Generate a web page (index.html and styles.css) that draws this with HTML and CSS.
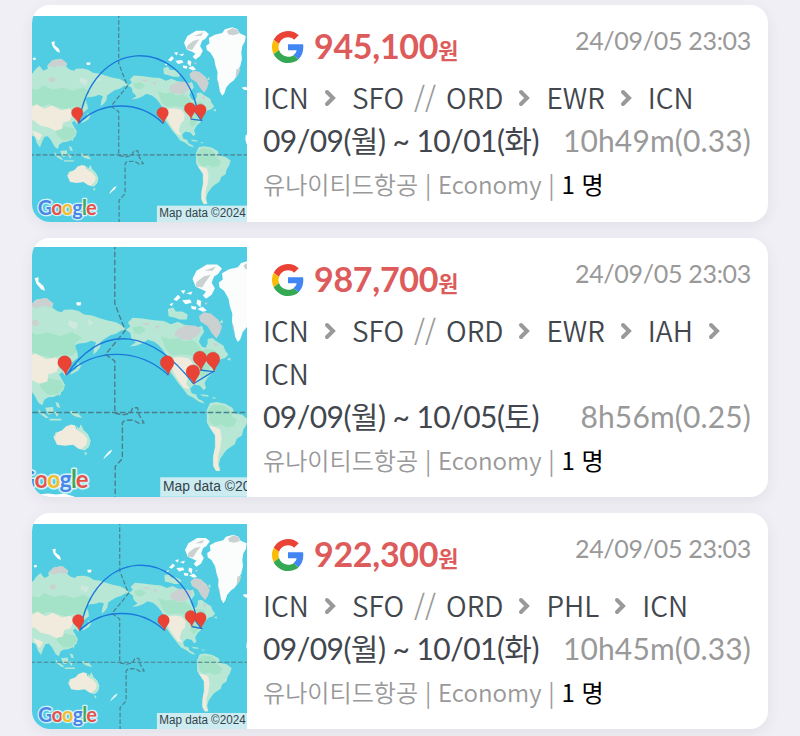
FILE: index.html
```html
<!DOCTYPE html>
<html lang="ko">
<head>
  <meta charset="utf-8">
  <title>항공권</title>
  <link rel="stylesheet" href="styles.css">
</head>
<body>
  <svg class="defs" width="0" height="0">
    <defs>
      <symbol id="google" viewBox="0 0 48 48">
        <path fill="#ea4335" d="M24 9.5c3.54 0 6.71 1.22 9.21 3.6l6.85-6.85C35.9 2.38 30.47 0 24 0 14.62 0 6.51 5.38 2.56 13.22l7.98 6.19C12.43 13.72 17.74 9.5 24 9.5z"/>
        <path fill="#4285f4" d="M46.98 24.55c0-1.57-.15-3.09-.38-4.55H24v9.02h12.94c-.58 2.96-2.26 5.48-4.78 7.18l7.73 6c4.51-4.18 7.09-10.36 7.09-17.65z"/>
        <path fill="#fbbc05" d="M10.53 28.59c-.48-1.45-.76-2.99-.76-4.59s.27-3.14.76-4.59l-7.98-6.19C.92 16.46 0 20.12 0 24c0 3.88.92 7.54 2.56 10.78l7.97-6.19z"/>
        <path fill="#34a853" d="M24 48c6.48 0 11.93-2.13 15.89-5.81l-7.73-6c-2.15 1.45-4.92 2.3-8.16 2.3-6.26 0-11.57-4.22-13.47-9.91l-7.98 6.19C6.51 42.62 14.62 48 24 48z"/>
      </symbol>
      <symbol id="next" viewBox="0 0 12 18">
        <path d="M3 3l6 6-6 6" fill="none" stroke="#999" stroke-width="4" stroke-linecap="round"/>
      </symbol>
      <path id="pin" d="M0 0C-3-15-20-18-20-32a17 17 0 0 1 34 0C14-20 3-15 0 0z" fill="#ea4335" stroke="#c5362b" stroke-width="1"/>
      <g id="world">
        <!-- asia -->
        <path class="land" d="M20 225L38 222 48 208 60 197 72 212 85 206 84 196 100 180 125 176 143 190 140 200 152 209 163 212 170 206 190 205 206 209 220 218 240 220 256 226 276 232 300 237 318 247 325 256 313 258 300 266 286 270 270 280 262 286 260 300 252 311 243 318 245 302 250 288 238 284 225 289 204 291 194 298 203 312 205 326 195 334 186 342 181 366 172 372 165 362 157 368 165 382 172 395 168 408 155 420 142 425 130 426 120 432 115 446 106 440 95 420 85 408 75 410 68 425 62 442 53 430 46 410 20 398z"/>
        <path class="forest" d="M20 262L55 270 70 256 100 268 130 263 160 272 190 262 215 276 196 291 202 310 188 322 165 318 142 328 110 320 88 312 60 322 20 310zM105 385L135 378 162 384 170 400 154 418 130 420 112 404z"/>
        <path class="desert" d="M20 330L52 312 75 326 98 316 125 330 150 325 160 340 150 362 130 368 128 386 108 392 88 382 62 376 42 360 20 362zM38 392L56 398 68 404 58 422 44 404z"/>
        <path class="tundra" d="M84 196L98 181 125 176 143 190 136 200 118 196 102 202zM86 235L102 230 108 242 94 248z"/>
        <path class="snow" d="M96 126L106 124 105 135 118 146 122 158 112 154 100 140zM200 187L213 187 211 195 202 195zM40 174L48 172 50 179 42 180z"/>
        <path class="soft" d="M182 232L205 240 198 256 180 245zM230 230L244 238 232 246z"/>
        <path class="land" d="M204 338L213 346 206 358 194 365 184 370 188 363 200 354zM156 413L162 416 158 424zM148 438L156 440 160 453 152 450zM104 455L116 464 132 478 124 478 110 468zM122 452L142 450 144 466 130 470zM146 462L158 462 152 476zM132 480L164 480 162 484 134 484zM184 460L202 463 215 478 200 475 190 470z"/>
        <!-- oceania -->
        <path class="desert" d="M143 526L150 515 165 509 174 499 188 494 198 497 200 505 206 508 212 495 218 508 229 519 236 535 232 550 222 559 206 555 192 545 172 548 152 545z"/>
        <path class="land" d="M200 497L208 505 212 495 218 508 229 519 236 535 232 550 222 559 214 555 226 544 228 530 216 516 204 510zM220 564L228 565 224 573zM147 516L152 512 146 533z"/>
        <path class="snow" d="M282 562L291 557 286 566 278 573 268 582 272 574z"/>
        <!-- north america -->
        <path class="land" d="M325 256L336 248 330 238 342 226 366 228 396 232 420 234 438 242 455 236 470 243 490 248 500 252 516 246 521 262 512 275 508 286 516 299 525 301 530 290 530 279 542 277 550 284 560 290 570 296 574 308 582 318 574 327 563 330 555 338 546 350 541 366 530 376 522 390 526 402 520 408 511 397 496 394 486 404 490 416 501 419 506 430 516 434 523 442 508 437 494 427 480 420 470 407 456 390 445 374 436 362 432 345 429 325 420 310 409 296 396 286 380 281 366 290 350 296 334 298 350 288 338 276 336 264z"/>
        <path class="forest" d="M412 272L436 280 455 276 470 285 492 282 505 292 516 308 530 304 548 307 556 318 542 332 525 326 496 322 468 318 440 320 425 306zM340 250L362 246 376 256 362 268 346 264zM520 340L538 340 532 366 516 382 508 366z"/>
        <path class="desert" d="M438 327L460 324 483 328 494 342 492 360 482 370 476 392 486 406 470 401 458 385 446 366 438 350z"/>
        <path class="tundra" d="M452 256L476 244 500 246 514 254 507 268 488 282 466 281 446 270zM508 222L520 212 538 215 556 230 566 248 560 266 552 278 540 264 530 247 512 235zM362 240L386 238 380 246zM396 248L410 245 404 256zM543 289L557 291 550 300z"/>
        <path class="land" d="M430 204L444 200 450 210 466 210 480 218 478 230 460 230 448 226 432 222zM560 238L566 230 569 240zM578 330L586 326 588 334z"/>
        <path class="snow" d="M492 128L502 108 528 92 554 92 566 102 556 116 546 122 540 138 548 152 540 168 526 178 518 170 526 160 514 154 500 148zM444 180L456 168 462 175 452 184zM462 158L474 156 470 166zM466 182L486 180 490 188 474 192zM488 196L502 198 500 206 490 204zM504 180L514 184 512 200 502 190zM434 192L444 188 440 197zM476 164L492 160 488 168zM504 204L518 198 528 208 518 211z"/>
        <path class="tundra" d="M502 136L520 122 538 118 526 134 516 150 500 147zM522 108L550 97 543 108zM522 188L530 188 526 194z"/>
        <!-- greenland -->
        <path class="snow" d="M558 137L568 130 566 114 584 104 606 99 614 88 636 82 652 88 658 100 676 108 674 124 666 138 663 158 665 176 660 198 652 212 651 226 640 241 628 250 618 262 612 280 606 287 599 274 596 255 591 236 592 216 586 198 582 177 571 158 560 150z"/>
        <path class="tundra" d="M620 94L636 84 653 90 656 101 638 106 624 103zM648 208L660 204 656 220 646 234zM592 238L597 252 594 258z"/>
        <path class="snow" d="M664 263L672 260 690 263 690 270 672 270zM676 405L690 398 690 438 679 432 675 418z"/>
        <!-- south america -->
        <path class="land" d="M528 458L536 440 552 438 574 442 592 452 598 466 616 470 631 481 627 495 619 508 616 522 603 530 598 544 586 552 578 558 570 568 562 580 558 594 562 610 552 612 544 600 543 580 548 552 548 522 538 506 528 490z"/>
        <path class="forest" d="M532 456L546 444 570 446 586 458 592 474 604 482 596 498 578 502 564 494 548 500 534 486z"/>
        <path class="desert" d="M533 498L548 500 561 506 565 526 562 552 556 574 556 600 561 611 550 610 544 596 545 570 550 548 549 520z"/>
        <path class="land" d="M511 418L530 420 534 424 518 423zM540 426L552 427 546 430z"/>
        <path class="snow" d="M70 672L100 670 130 668 150 670 170 668 195 675 200 684 70 684z"/>
        <!-- equator and date line -->
        <path class="border" d="M30 464H690"/>
        <path class="border" d="M297 40V190L323 258 274 318 297 335V466L318 470 336 466 342 452H354L358 470 370 490 358 492 344 483 322 484 316 490V580L298 600V684"/>
      </g>
    </defs>
  </svg>

  <div class="card">
    <svg class="map" viewBox="38 48 642 617" preserveAspectRatio="none">
      <use href="#world"/>
      <path class="route-line" d="M178 370C215 108 480 108 530 322M176 370C245 300 360 300 430 370M512 357L544 361L526 335"/>
      <use href="#pin" x="176" y="370"/>
      <use href="#pin" x="431" y="370"/>
      <use href="#pin" x="513" y="357"/>
      <use href="#pin" x="544" y="361"/>
      <text class="logo" x="55" y="643" textLength="176"><tspan class="b">G</tspan><tspan class="r">o</tspan><tspan class="y">o</tspan><tspan class="b">g</tspan><tspan class="g">l</tspan><tspan class="r">e</tspan></text>
      <rect class="credit-bg" x="411" y="616" width="269" height="49"/>
      <text class="credit" x="418" y="651" textLength="258" lengthAdjust="spacingAndGlyphs">Map data ©2024</text>
    </svg>
    <div class="info">
      <div class="top">
        <svg class="google"><use href="#google"/></svg>
        <div class="price">945,100<span>원</span></div>
        <div class="time">24/09/05 23:03</div>
      </div>
      <div class="route">
        <span>ICN</span><svg class="next"><use href="#next"/></svg><span>SFO</span><i>//</i><span>ORD</span><svg class="next"><use href="#next"/></svg><span>EWR</span><svg class="next"><use href="#next"/></svg><span>ICN</span>
      </div>
      <div class="dates">
        <span>09/09(월) ~ 10/01(화)</span>
        <span class="duration">10h49m(0.33)</span>
      </div>
      <div class="airline">유나이티드항공 | Economy | <b>1 명</b></div>
    </div>
  </div>

  <div class="card tall">
    <svg class="map" viewBox="38 37 642 748" preserveAspectRatio="none">
      <use href="#world" transform="translate(-68.2 -20.1) scale(1.19)"/>
      <path class="route-line" d="M140 420C255 255 400 290 520 446M140 420C225 338 355 338 445 420M540 405L579 410L520 446"/>
      <use href="#pin" transform="translate(139 421) scale(1.19)"/>
      <use href="#pin" transform="translate(445 421) scale(1.19)"/>
      <use href="#pin" transform="translate(543 407) scale(1.19)"/>
      <use href="#pin" transform="translate(582 410) scale(1.19)"/>
      <use href="#pin" transform="translate(522 448) scale(1.19)"/>
      <g transform="translate(-68.2 -20.1) scale(1.19)">
        <text class="logo" x="55" y="653" textLength="176"><tspan class="b">G</tspan><tspan class="r">o</tspan><tspan class="y">o</tspan><tspan class="b">g</tspan><tspan class="g">l</tspan><tspan class="r">e</tspan></text>
        <rect class="credit-bg" x="411" y="627" width="269" height="49"/>
        <text class="credit" x="418" y="661" textLength="258" lengthAdjust="spacingAndGlyphs">Map data ©2024</text>
      </g>
    </svg>
    <div class="info">
      <div class="top">
        <svg class="google"><use href="#google"/></svg>
        <div class="price">987,700<span>원</span></div>
        <div class="time">24/09/05 23:03</div>
      </div>
      <div class="route">
        <span>ICN</span><svg class="next"><use href="#next"/></svg><span>SFO</span><i>//</i><span>ORD</span><svg class="next"><use href="#next"/></svg><span>EWR</span><svg class="next"><use href="#next"/></svg><span>IAH</span><svg class="next"><use href="#next"/></svg><span>ICN</span>
      </div>
      <div class="dates">
        <span>09/09(월) ~ 10/05(토)</span>
        <span class="duration">8h56m(0.25)</span>
      </div>
      <div class="airline">유나이티드항공 | Economy | <b>1 명</b></div>
    </div>
  </div>

  <div class="card">
    <svg class="map" viewBox="38 41 642 614" preserveAspectRatio="none">
      <use href="#world" transform="translate(3 -9)"/>
      <path class="route-line" d="M182 360C222 108 478 108 527 312M180 360C248 292 362 292 434 360M515 348L544 354L526 330"/>
      <use href="#pin" x="179" y="361"/>
      <use href="#pin" x="434" y="361"/>
      <use href="#pin" x="515" y="349"/>
      <use href="#pin" x="544" y="354"/>
      <text class="logo" x="56" y="634" textLength="176"><tspan class="b">G</tspan><tspan class="r">o</tspan><tspan class="y">o</tspan><tspan class="b">g</tspan><tspan class="g">l</tspan><tspan class="r">e</tspan></text>
      <rect class="credit-bg" x="411" y="607" width="269" height="49"/>
      <text class="credit" x="418" y="641" textLength="258" lengthAdjust="spacingAndGlyphs">Map data ©2024</text>
    </svg>
    <div class="info">
      <div class="top">
        <svg class="google"><use href="#google"/></svg>
        <div class="price">922,300<span>원</span></div>
        <div class="time">24/09/05 23:03</div>
      </div>
      <div class="route">
        <span>ICN</span><svg class="next"><use href="#next"/></svg><span>SFO</span><i>//</i><span>ORD</span><svg class="next"><use href="#next"/></svg><span>PHL</span><svg class="next"><use href="#next"/></svg><span>ICN</span>
      </div>
      <div class="dates">
        <span>09/09(월) ~ 10/01(화)</span>
        <span class="duration">10h45m(0.33)</span>
      </div>
      <div class="airline">유나이티드항공 | Economy | <b>1 명</b></div>
    </div>
  </div>
</body>
</html>
```
FILE: styles.css
```css
* {
  box-sizing: border-box;
}

body {
  margin: 0;
  padding: 5px 32px 0;
  height: 736px;
  overflow: hidden;
  background-color: #f0eff5;
  font-family: Lato, "Noto Sans CJK KR", sans-serif;
  color: #42464d;
}

.defs {
  display: block;
}

.card {
  display: flex;
  height: 217px;
  margin-bottom: 16px;
  padding-top: 11px;
  background-color: #fff;
  border-radius: 18px;
  overflow: hidden;
  box-shadow: 0 4px 14px rgba(60, 60, 90, 0.08);
}

.card.tall {
  height: 259px;
  padding-top: 9px;
}

.card.tall .info {
  padding-top: 7px;
}

.card:last-child {
  height: 216px;
}

.map {
  flex: none;
  width: 215px;
  height: 100%;
  background-color: #51cde3;
}

.land { fill: #b8e8d5; }
.forest { fill: #a5e3c8; }
.desert { fill: #f1ebdd; }
.tundra { fill: #cbd0d0; }
.soft { fill: #d0e9df; }
.snow { fill: #fbfcfc; }

.border {
  fill: none;
  stroke: #4b7f8a;
  stroke-width: 3.5;
  stroke-dasharray: 14 6;
}

.route-line {
  fill: none;
  stroke: #1b79db;
  stroke-width: 4;
}

.logo {
  font: 60px Lato, sans-serif;
  font-weight: bold;
  stroke: rgba(255, 255, 255, 0.75);
  stroke-width: 8;
  stroke-linejoin: round;
  paint-order: stroke;
}

.logo .b { fill: #4a86e8; }
.logo .r { fill: #e5544a; }
.logo .y { fill: #f4bd2c; }
.logo .g { fill: #3fa75a; }

.credit-bg {
  fill: rgba(245, 245, 245, 0.75);
}

.credit {
  font: 36px "Liberation Sans", Arial, sans-serif;
  fill: #33434a;
}

.info {
  flex: 1;
  padding: 6px 17px 0 16px;
}

.card:not(.tall) .info {
  padding-top: 5px;
}

.top {
  display: flex;
  height: 55px;
  padding-left: 9px;
}

.google {
  width: 32px;
  height: 32px;
  margin: 10px 10px 0 0;
}

.price {
  font-size: 34px;
  line-height: 50px;
  font-weight: bold;
  letter-spacing: -0.3px;
  color: #dd5b5b;
}

.price span {
  font-size: 22px;
}

.time {
  margin-left: auto;
  font-size: 25px;
  line-height: 38px;
  letter-spacing: -0.3px;
  color: #999;
}

.route {
  display: flex;
  flex-wrap: wrap;
  align-items: center;
  font-family: "Noto Sans CJK KR", sans-serif;
  font-size: 28px;
  font-weight: 350;
  line-height: 43px;
}

.route i {
  margin: 0 10px;
  font-style: normal;
  color: #999;
}

.next {
  width: 12px;
  height: 18px;
  margin: 0 16px 0 15px;
}

.dates {
  display: flex;
  justify-content: space-between;
  font-size: 30px;
  line-height: 43px;
  letter-spacing: -0.55px;
  white-space: nowrap;
}

.duration {
  letter-spacing: 0.15px;
  color: #999;
}

.airline {
  font-family: "Noto Sans CJK KR", sans-serif;
  font-size: 24.1px;
  font-weight: 350;
  line-height: 44px;
  color: #999;
}

.airline b {
  font-weight: 400;
  color: #000;
}
```
